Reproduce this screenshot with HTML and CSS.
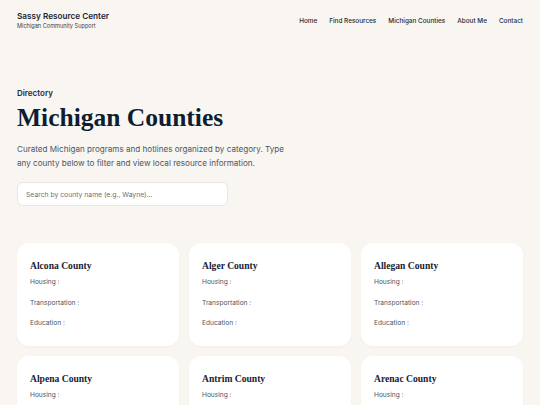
FILE: index.html
```html
<!DOCTYPE html>
<html lang="en">
<head>
<meta charset="utf-8">
<title>Michigan Counties</title>
<link rel="stylesheet" href="styles.css">
</head>
<body>
<header class="site-header">
  <div class="brand">
    <div class="brand-name">Sassy Resource Center</div>
    <div class="brand-sub">Michigan Community Support</div>
  </div>
  <nav class="nav">
    <a href="#">Home</a>
    <a href="#">Find Resources</a>
    <a href="#">Michigan Counties</a>
    <a href="#">About Me</a>
    <a href="#">Contact</a>
  </nav>
</header>
<main class="main">
  <section class="intro">
    <div class="eyebrow">Directory</div>
    <h1 class="title">Michigan Counties</h1>
    <p class="lead">Curated Michigan programs and hotlines organized by category. Type any county below to filter and view local resource information.</p>
    <input class="search" type="text" placeholder="Search by county name (e.g., Wayne)...">
  </section>
  <section class="grid">
    <article class="card"><h2 class="card-title">Alcona County</h2><p class="row">Housing :</p><p class="row">Transportation :</p><p class="row">Education :</p></article>
    <article class="card"><h2 class="card-title">Alger County</h2><p class="row">Housing :</p><p class="row">Transportation :</p><p class="row">Education :</p></article>
    <article class="card"><h2 class="card-title">Allegan County</h2><p class="row">Housing :</p><p class="row">Transportation :</p><p class="row">Education :</p></article>
    <article class="card"><h2 class="card-title">Alpena County</h2><p class="row">Housing :</p><p class="row">Transportation :</p><p class="row">Education :</p></article>
    <article class="card"><h2 class="card-title">Antrim County</h2><p class="row">Housing :</p><p class="row">Transportation :</p><p class="row">Education :</p></article>
    <article class="card"><h2 class="card-title">Arenac County</h2><p class="row">Housing :</p><p class="row">Transportation :</p><p class="row">Education :</p></article>
  </section>
</main>
</body>
</html>
```
FILE: styles.css
```css
* { box-sizing: border-box; }
html, body { margin: 0; padding: 0; }
body {
  background: #f9f6f1;
  font-family: Inter, "Liberation Sans", sans-serif;
  color: #1e293b;
}
.site-header {
  display: flex;
  justify-content: space-between;
  align-items: center;
  padding: 1px 17px 0 17px;
  height: 40px;
}
.brand-name {
  font-size: 8.2px;
  font-weight: 600;
  color: #1e2533;
  line-height: 11px;
}
.brand-sub {
  font-size: 5.6px;
  color: #374151;
  line-height: 8px;
}
.nav {
  display: flex;
  gap: 12px;
}
.nav a {
  font-size: 6.4px;
  font-weight: 500;
  color: #1f2937;
  text-decoration: none;
}
.main {
  padding: 0 17px;
}
.intro {
  padding-top: 48px;
}
.eyebrow {
  font-size: 8px;
  font-weight: 600;
  color: #1e293b;
  line-height: 11px;
}
.title {
  margin: 2px 0 0 0;
  font-family: "Liberation Serif", "DejaVu Serif", serif;
  font-weight: 700;
  font-size: 25.5px;
  line-height: 34px;
  color: #0f1d33;
}
.lead {
  margin: 8px 0 0 0;
  font-size: 8.1px;
  line-height: 13.5px;
  color: #4b5563;
  max-width: 276px;
}
.search {
  display: block;
  margin-top: 12px;
  width: 211px;
  height: 24px;
  border: 1px solid #e5e7eb;
  border-radius: 6px;
  background: #fff;
  padding: 0 8px;
  font-family: Inter, "Liberation Sans", sans-serif;
  font-size: 6.8px;
  color: #374151;
  outline: none;
}
.search::placeholder { color: #6b7280; }
.grid {
  margin-top: 37px;
  display: grid;
  grid-template-columns: repeat(3, 1fr);
  gap: 10px;
}
.card {
  background: #fff;
  border-radius: 12px;
  padding: 16px 13px 14px 13px;
  height: 103px;
  box-shadow: 0 1px 3px rgba(0,0,0,0.03);
}
.card-title {
  margin: 0 0 5px 0;
  font-family: "Liberation Serif", "DejaVu Serif", serif;
  font-weight: 700;
  font-size: 9.6px;
  line-height: 13px;
  color: #1a2233;
}
.row {
  margin: 0 0 9px 0;
  font-size: 6.6px;
  line-height: 11.5px;
  color: #4b5563;
}
```
